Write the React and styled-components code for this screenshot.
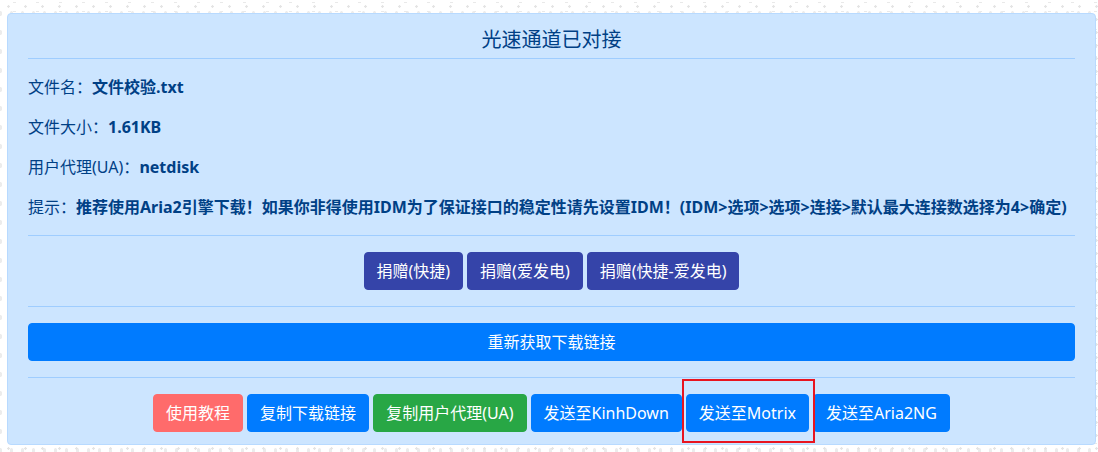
import React from "react";
import styled, { createGlobalStyle } from "styled-components";

const GlobalStyle = createGlobalStyle`
  html, body {
    margin: 0;
    padding: 0;
  }

  body {
    background-color: #fff;
    background-image:
      radial-gradient(#e4e4e4 1.3px, transparent 1.7px),
      radial-gradient(#ececec 1.3px, transparent 1.7px),
      radial-gradient(#e9e9e9 1.2px, transparent 1.6px);
    background-size: 17px 13px, 11px 19px, 23px 9px;
    background-position: 0 0, 6px 4px, 3px 7px;
    font-family: "Segoe UI", "Noto Sans", "Noto Sans CJK SC", sans-serif;
    min-height: 452px;
    overflow: hidden;
  }
`;

const Card = styled.div`
  box-sizing: border-box;
  width: 1089px;
  margin: 13px 0 0 7px;
  padding: 12px 20px;
  background: #cce5ff;
  border: 1px solid #b8daff;
  border-radius: 4px;
  color: #004085;
`;

const Title = styled.h5`
  margin: 0 0 6px;
  padding-top: 2px;
  font-size: 20px;
  font-weight: 400;
  line-height: 24px;
  text-align: center;
`;

const Rule = styled.hr`
  margin: ${(p) => p.$top ?? 16}px 0 16px;
  border: 0;
  border-top: 1px solid #9fcdff;
`;

const Line = styled.p`
  margin: 0 0 16px;
  font-size: 16px;
  line-height: 24px;
  white-space: nowrap;

  b {
    font-weight: 700;
  }
`;

const ButtonRow = styled.div`
  display: flex;
  justify-content: center;
  gap: 4px;
`;

const tones = {
  indigo: "#3544a9",
  blue: "#007bff",
  green: "#28a745",
  coral: "#ff6b6b",
};

const Button = styled.button`
  box-sizing: border-box;
  height: 38px;
  padding: 6px 12px;
  border: 1px solid ${(p) => tones[p.$tone]};
  border-radius: 4px;
  background: ${(p) => tones[p.$tone]};
  color: #fff;
  font-family: inherit;
  font-size: 16px;
  line-height: 24px;
  white-space: nowrap;
  width: ${(p) => (p.$block ? "100%" : "auto")};
  cursor: pointer;
`;

const Marked = styled.span`
  position: relative;
  display: inline-flex;

  &::after {
    content: "";
    position: absolute;
    left: -4px;
    right: -6px;
    top: -15px;
    bottom: -11px;
    border: 2px solid #e8141f;
    pointer-events: none;
  }
`;

export default function App() {
  return (
    <>
      <GlobalStyle />
      <Card>
        <Title>光速通道已对接</Title>
        <Rule $top={0} />
        <Line>
          文件名：<b>文件校验.txt</b>
        </Line>
        <Line>
          文件大小：<b>1.61KB</b>
        </Line>
        <Line>
          用户代理(UA)：<b>netdisk</b>
        </Line>
        <Line>
          提示：
          <b>
            推荐使用Aria2引擎下载！如果你非得使用IDM为了保证接口的稳定性请先设置IDM！(IDM&gt;选项&gt;选项&gt;连接&gt;默认最大连接数选择为4&gt;确定)
          </b>
        </Line>
        <Rule $top={0} />
        <ButtonRow>
          <Button $tone="indigo">捐赠(快捷)</Button>
          <Button $tone="indigo">捐赠(爱发电)</Button>
          <Button $tone="indigo">捐赠(快捷-爱发电)</Button>
        </ButtonRow>
        <Rule />
        <Button $tone="blue" $block>
          重新获取下载链接
        </Button>
        <Rule />
        <ButtonRow>
          <Button $tone="coral">使用教程</Button>
          <Button $tone="blue">复制下载链接</Button>
          <Button $tone="green">复制用户代理(UA)</Button>
          <Button $tone="blue">发送至KinhDown</Button>
          <Marked>
            <Button $tone="blue">发送至Motrix</Button>
          </Marked>
          <Button $tone="blue">发送至Aria2NG</Button>
        </ButtonRow>
      </Card>
    </>
  );
}
